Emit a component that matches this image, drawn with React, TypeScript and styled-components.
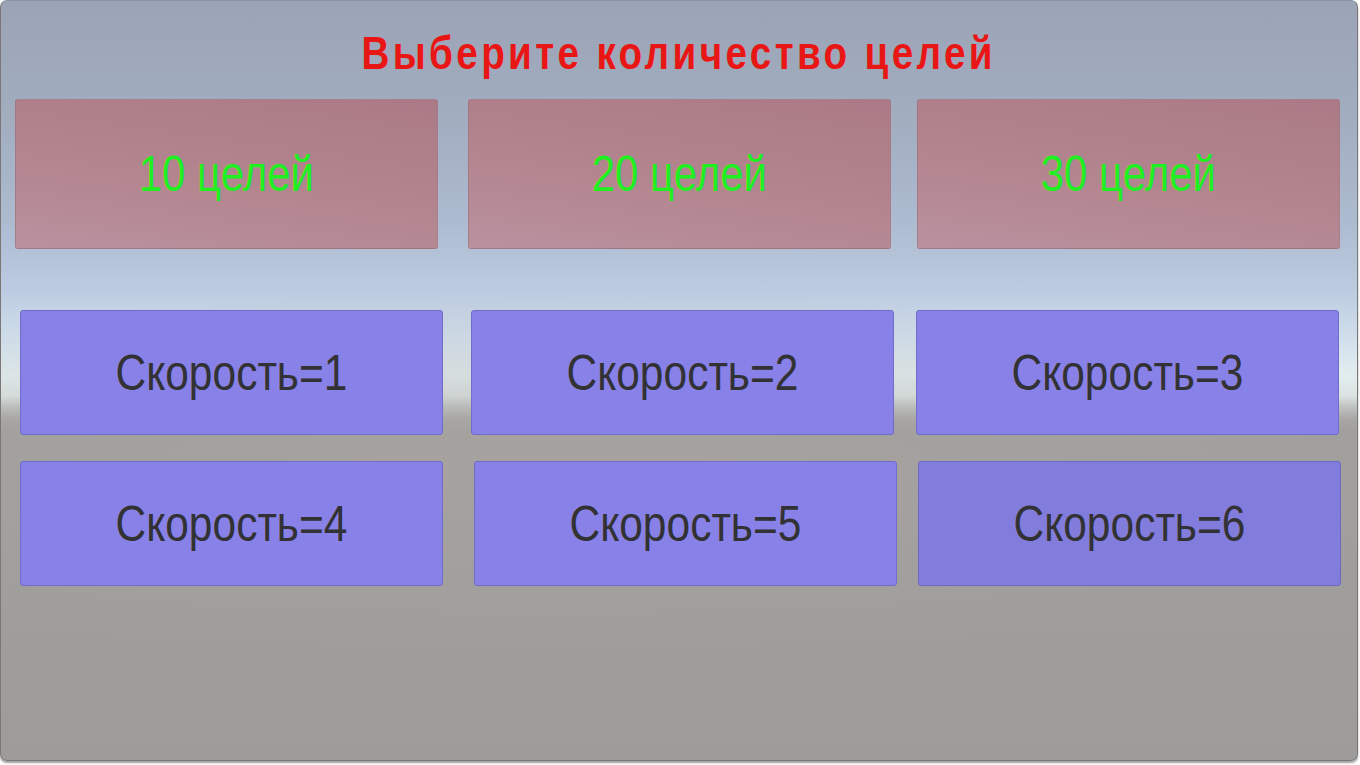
import React from "react";
import styled, { createGlobalStyle } from "styled-components";

const Global = createGlobalStyle`
  html, body { margin: 0; padding: 0; background: #ffffff; }
  #root { width: 1360px; height: 765px; }
`;

const Frame = styled.div`
  box-sizing: border-box;
  width: 1358px;
  height: 761px;
  border-radius: 7px;
  border: 1px solid #7a7876;
  border-top-color: #8a93a6;
  box-shadow: 0 2px 2px rgba(80, 78, 76, 0.55);
  overflow: hidden;
  background:
    radial-gradient(ellipse 1400px 260px at 40% 470px, rgba(170,166,164,0.5), rgba(160,158,156,0) 70%),
    linear-gradient(
      to bottom,
      #9ba4b6 0px,
      #a2adc0 120px,
      #adbbd0 220px,
      #bccbe0 290px,
      #d2e0ec 340px,
      #e3eeef 375px,
      #dde6e5 395px,
      #c2c6c5 405px,
      #a8a7a5 418px,
      #a19f9d 430px,
      #a09e9c 600px,
      #9d9c9a 760px
    );
  display: flex;
  flex-direction: column;
  font-family: "Liberation Sans", Arial, sans-serif;
`;

const Title = styled.h1`
  margin: 0;
  height: 98px;
  display: flex;
  align-items: center;
  justify-content: center;
  padding-top: 6px;
  box-sizing: border-box;
  color: #e91616;
  font-size: 46px;
  font-weight: 700;
  letter-spacing: 4px;
`;

const Narrow = styled.span<{ $scale: number }>`
  display: inline-block;
  white-space: nowrap;
  transform: scaleX(${(p) => p.$scale});
  transform-origin: center;
`;

const Row = styled.div<{ $top: number; $left: number }>`
  display: flex;
  margin-top: ${(p) => p.$top}px;
  padding-left: ${(p) => p.$left}px;
`;

const TargetButton = styled.button<{ $ml: number }>`
  box-sizing: border-box;
  width: 423px;
  height: 150px;
  margin-left: ${(p) => p.$ml}px;
  border: 1px solid rgba(150, 110, 125, 0.45);
  border-radius: 3px;
  background: linear-gradient(188deg, #ab7a86 0%, #b3858f 55%, #b9919f 100%);
  color: #1ff01f;
  font-family: inherit;
  font-size: 50px;
  font-weight: 400;
  display: flex;
  align-items: center;
  justify-content: center;
  padding: 0;
  cursor: pointer;
`;

const SpeedButton = styled.button<{ $ml: number; $dark?: boolean }>`
  box-sizing: border-box;
  width: 423px;
  height: 125px;
  margin-left: ${(p) => p.$ml}px;
  border: 1px solid ${(p) => (p.$dark ? "#6d68c0" : "#716cc8")};
  border-radius: 3px;
  background: ${(p) => (p.$dark ? "#827cdd" : "#8881e7")};
  color: #323234;
  font-family: inherit;
  font-size: 50px;
  font-weight: 400;
  display: flex;
  align-items: center;
  justify-content: center;
  padding: 0;
  cursor: pointer;
`;

const targets = [
  { label: "10 целей", ml: 0 },
  { label: "20 целей", ml: 30 },
  { label: "30 целей", ml: 26 },
];

const speedRow1 = [
  { label: "Скорость=1", ml: 0 },
  { label: "Скорость=2", ml: 28 },
  { label: "Скорость=3", ml: 22 },
];

const speedRow2 = [
  { label: "Скорость=4", ml: 0 },
  { label: "Скорость=5", ml: 31 },
  { label: "Скорость=6", ml: 21, dark: true },
];

export default function App() {
  return (
    <>
      <Global />
      <Frame>
        <Title>
          <Narrow $scale={0.84}>Выберите количество целей</Narrow>
        </Title>
        <Row $top={0} $left={14}>
          {targets.map((t) => (
            <TargetButton key={t.label} $ml={t.ml}>
              <Narrow $scale={0.84}>{t.label}</Narrow>
            </TargetButton>
          ))}
        </Row>
        <Row $top={61} $left={19}>
          {speedRow1.map((s) => (
            <SpeedButton key={s.label} $ml={s.ml}>
              <Narrow $scale={0.85}>{s.label}</Narrow>
            </SpeedButton>
          ))}
        </Row>
        <Row $top={26} $left={19}>
          {speedRow2.map((s) => (
            <SpeedButton key={s.label} $ml={s.ml} $dark={s.dark}>
              <Narrow $scale={0.85}>{s.label}</Narrow>
            </SpeedButton>
          ))}
        </Row>
      </Frame>
    </>
  );
}
